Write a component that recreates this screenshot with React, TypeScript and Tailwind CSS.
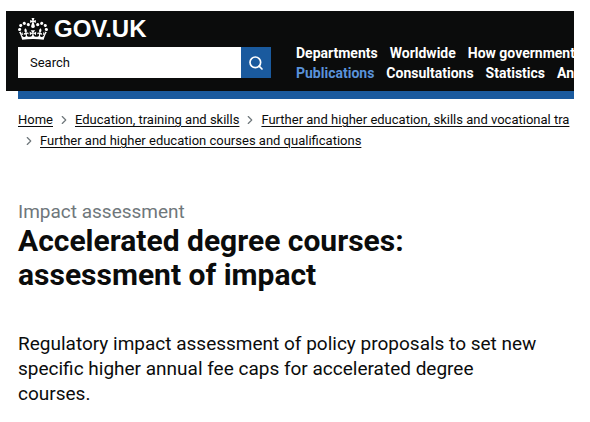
import { ChevronRight, Search } from "lucide-react";

type NavLink = {
  label: string;
  active?: boolean;
};

const navRows: NavLink[][] = [
  [
    { label: "Departments" },
    { label: "Worldwide" },
    { label: "How government" },
  ],
  [
    { label: "Publications", active: true },
    { label: "Consultations" },
    { label: "Statistics" },
    { label: "Ann" },
  ],
];

const breadcrumbRows = [
  [
    "Home",
    "Education, training and skills",
    "Further and higher education, skills and vocational tra",
  ],
  ["Further and higher education courses and qualifications"],
];

function Crown() {
  return (
    <svg
      viewBox="0 0 132 97"
      className="h-[22px] w-[30px]"
      fill="currentColor"
      fillRule="evenodd"
      aria-hidden="true"
    >
      <path d="M25 30.2c3.5 1.5 7.7-.2 9.1-3.7 1.5-3.6-.2-7.8-3.9-9.2-3.6-1.4-7.6.3-9.1 3.9-1.4 3.5.3 7.5 3.9 9zM9 39.5c3.6 1.5 7.8-.2 9.2-3.7 1.5-3.6-.2-7.8-3.9-9.1-3.6-1.5-7.6.2-9.1 3.8-1.4 3.5.3 7.5 3.8 9zM4.4 57.2c3.5 1.5 7.7-.2 9.1-3.8 1.5-3.6-.2-7.7-3.9-9.1-3.5-1.5-7.6.3-9.1 3.8-1.4 3.5.3 7.6 3.9 9.1zm38.3-21.4c3.5 1.5 7.7-.2 9.1-3.8 1.5-3.6-.2-7.7-3.9-9.1-3.6-1.5-7.6.3-9.1 3.8-1.3 3.6.4 7.7 3.9 9.1zm64.4-5.6c-3.6 1.5-7.8-.2-9.1-3.7-1.5-3.6.2-7.8 3.8-9.2 3.6-1.4 7.7.3 9.2 3.9 1.3 3.5-.4 7.5-3.9 9zm15.9 9.3c-3.6 1.5-7.7-.2-9.1-3.7-1.5-3.6.2-7.8 3.7-9.1 3.6-1.5 7.7.2 9.2 3.8 1.5 3.5-.3 7.5-3.8 9zm4.7 17.7c-3.6 1.5-7.8-.2-9.2-3.8-1.5-3.6.2-7.7 3.9-9.1 3.6-1.5 7.7.3 9.2 3.8 1.3 3.5-.4 7.6-3.9 9.1zM89.3 35.8c-3.6 1.5-7.8-.2-9.2-3.8-1.4-3.6.2-7.7 3.9-9.1 3.6-1.5 7.7.3 9.2 3.8 1.4 3.6-.3 7.7-3.9 9.1zM69.7 17.7l8.9 4.7V9.3l-8.9 2.8c-.2-.3-.5-.6-.9-.9L72.4 0H59.6l3.5 11.2c-.3.3-.6.5-.9.9l-8.8-2.8v13.1l8.8-4.7c.3.3.6.7.9.9l-5 15.4v.1c-.2.8-.4 1.6-.4 2.4 0 4.1 3.1 7.5 7 8.1h.2c.3 0 .7.1 1 .1.4 0 .7 0 1-.1h.2c4-.6 7.1-4.1 7.1-8.1 0-.8-.1-1.7-.4-2.4V34l-5.1-15.4c.4-.2.7-.6 1-.9zM66 92.8c16.9 0 32.8 1.1 47.1 3.2 4-16.9 8.9-26.7 14-33.5l-9.6-3.4c1 4.9 1.1 7.2 0 10.2-1.5-1.4-3-4.3-4.2-8.7L108.6 76c2.8-2 5-3.2 7.5-3.3-4.4 9.4-10 11.9-13.6 11.2-4.3-.8-6.3-4.6-5.6-7.9 1-4.7 5.7-5.9 8-.5 4.3-8.7-3-11.4-7.6-8.8 7.1-7.2 7.9-13.5 2.1-21.1-8 6.1-8.1 12.3-4.5 20.8-4.7-5.4-12.1-2.5-9.5 6.2 3.4-5.2 7.9-2 7.2 3.1-.6 4.3-6.4 7.8-13.5 7.2-10.3-.9-10.9-8-11.2-13.8 2.5-.5 7.1 1.8 11 7.3L80.2 60c-4.1 4.4-8 5.3-12.3 5.4 1.4-4.4 8-11.6 8-11.6H55.5s6.4 7.2 7.9 11.6c-4.2-.1-8-1-12.3-5.4l1.4 16.4c3.9-5.5 8.5-7.7 10.9-7.3-.3 5.8-.9 12.8-11.1 13.8-7.2.6-12.9-2.9-13.5-7.2-.7-5 3.8-8.3 7.1-3.1 2.7-8.7-4.6-11.6-9.4-6.2 3.7-8.5 3.6-14.7-4.6-20.8-5.8 7.6-5 13.9 2.2 21.1-4.7-2.6-11.9.1-7.7 8.8 2.3-5.5 7.1-4.2 8.1.5.7 3.3-1.3 7.1-5.7 7.9-3.5.7-9-1.8-13.5-11.2 2.5.1 4.7 1.3 7.5 3.3l-4.7-15.4c-1.2 4.4-2.7 7.2-4.3 8.7-1.1-3-.9-5.3 0-10.2l-9.5 3.4c5 6.9 9.9 16.7 14 33.5 14.8-2.1 30.8-3.2 47.7-3.2z" />
    </svg>
  );
}

function Header() {
  return (
    <header className="flex h-20 gap-[25px] overflow-hidden bg-[#0b0c0c] pl-3 text-white">
      <div className="w-[253px] shrink-0">
        <a href="#" className="flex h-9 items-center gap-[6px]">
          <Crown />
          <span className="font-['Liberation_Sans',sans-serif] text-[24px] leading-9 font-bold">
            GOV.UK
          </span>
        </a>
        <form className="flex h-[31px]" onSubmit={(event) => event.preventDefault()}>
          <input
            type="text"
            aria-label="Search"
            placeholder="Search"
            className="min-w-0 flex-1 bg-white px-3 text-[13px] text-[#0b0c0c] outline-none placeholder:text-[#0b0c0c]"
          />
          <button
            type="submit"
            aria-label="Search GOV.UK"
            className="flex w-[30px] items-center justify-center bg-[#1a5a9e]"
          >
            <Search className="size-4" strokeWidth={2.5} />
          </button>
        </form>
      </div>
      <nav className="pt-8 text-[14px] leading-5 font-bold whitespace-nowrap">
        {navRows.map((row) => (
          <ul key={row[0].label} className="flex gap-3">
            {row.map((link) => (
              <li key={link.label}>
                <a
                  href="#"
                  aria-current={link.active ? "page" : undefined}
                  className={link.active ? "text-[#5a92da]" : undefined}
                >
                  {link.label}
                </a>
              </li>
            ))}
          </ul>
        ))}
      </nav>
    </header>
  );
}

function Breadcrumbs() {
  return (
    <nav
      aria-label="Breadcrumb"
      className="overflow-hidden pt-[10px] text-[13px] leading-[21px] whitespace-nowrap"
    >
      {breadcrumbRows.map((row, rowIndex) => (
        <ol key={row[0]} className="flex">
          {row.map((label, index) => (
            <li key={label} className="flex items-center">
              {(rowIndex > 0 || index > 0) && (
                <ChevronRight
                  className="mx-1 size-[14px] text-[#6f777b]"
                  strokeWidth={2}
                  aria-hidden="true"
                />
              )}
              <a href="#" className="underline underline-offset-2">
                {label}
              </a>
            </li>
          ))}
        </ol>
      ))}
    </nav>
  );
}

export default function App() {
  return (
    <div className="min-h-screen bg-white pt-[11px] pr-4 pb-4 pl-[6px] font-[Roboto,sans-serif] text-[#0b0c0c]">
      <Header />
      <div className="ml-3 h-2 bg-[#1a5a9e]" />
      <main className="pl-3">
        <Breadcrumbs />
        <p className="mt-[49px] text-[19px] leading-6 text-[#6f777b]">
          Impact assessment
        </p>
        <h1 className="max-w-[420px] text-[30px] leading-[34px] font-bold">
          Accelerated degree courses: assessment of impact
        </h1>
        <p className="mt-[39px] max-w-[526px] text-[19px] leading-[25px]">
          Regulatory impact assessment of policy proposals to set new specific
          higher annual fee caps for accelerated degree courses.
        </p>
      </main>
    </div>
  );
}
